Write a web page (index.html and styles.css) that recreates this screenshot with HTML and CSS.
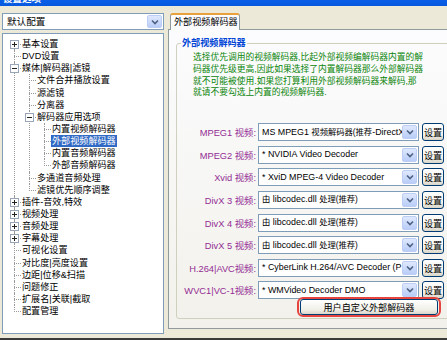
FILE: index.html
```html
<!DOCTYPE html>
<html>
<head>
<meta charset="utf-8">
<link rel="stylesheet" href="styles.css">
</head>
<body>
<div class="window">
  <div class="titlebar"><span class="title">设置选项</span></div>
  <div class="main">
    <div class="left">
      <div class="combo">
        <span class="combo-text">默认配置</span>
        <span class="drop"><svg width="8" height="6" viewBox="0 0 8 6"><path d="M1 1.5l3 3 3-3" fill="none" stroke="#4d6185" stroke-width="1.6"/></svg></span>
      </div>
      <div class="tree">
        <ul class="root">
          <li><svg class="exp" width="9" height="9" viewBox="0 0 9 9"><rect x=".5" y=".5" width="8" height="8" fill="#fff" stroke="#98a5b6"/><path d="M2 4.5h5M4.5 2v5" stroke="#222"/></svg><span class="row">基本设置</span></li>
          <li><span class="row">DVD设置</span></li>
          <li><svg class="exp" width="9" height="9" viewBox="0 0 9 9"><rect x=".5" y=".5" width="8" height="8" fill="#fff" stroke="#98a5b6"/><path d="M2 4.5h5" stroke="#222"/></svg><span class="row">媒体|解码器|滤镜</span>
            <ul>
              <li><span class="row">文件合并播放设置</span></li>
              <li><span class="row">源滤镜</span></li>
              <li><span class="row">分离器</span></li>
              <li><svg class="exp" width="9" height="9" viewBox="0 0 9 9"><rect x=".5" y=".5" width="8" height="8" fill="#fff" stroke="#98a5b6"/><path d="M2 4.5h5" stroke="#222"/></svg><span class="row">解码器应用选项</span>
                <ul>
                  <li><span class="row">内置视频解码器</span></li>
                  <li><span class="row"><span class="sel">外部视频解码器</span></span></li>
                  <li><span class="row">内置音频解码器</span></li>
                  <li><span class="row">外部音频解码器</span></li>
                </ul>
              </li>
              <li><span class="row">多通道音频处理</span></li>
              <li><span class="row">滤镜优先顺序调整</span></li>
            </ul>
          </li>
          <li><svg class="exp" width="9" height="9" viewBox="0 0 9 9"><rect x=".5" y=".5" width="8" height="8" fill="#fff" stroke="#98a5b6"/><path d="M2 4.5h5M4.5 2v5" stroke="#222"/></svg><span class="row">插件-音效,特效</span></li>
          <li><svg class="exp" width="9" height="9" viewBox="0 0 9 9"><rect x=".5" y=".5" width="8" height="8" fill="#fff" stroke="#98a5b6"/><path d="M2 4.5h5M4.5 2v5" stroke="#222"/></svg><span class="row">视频处理</span></li>
          <li><svg class="exp" width="9" height="9" viewBox="0 0 9 9"><rect x=".5" y=".5" width="8" height="8" fill="#fff" stroke="#98a5b6"/><path d="M2 4.5h5M4.5 2v5" stroke="#222"/></svg><span class="row">音频处理</span></li>
          <li><svg class="exp" width="9" height="9" viewBox="0 0 9 9"><rect x=".5" y=".5" width="8" height="8" fill="#fff" stroke="#98a5b6"/><path d="M2 4.5h5M4.5 2v5" stroke="#222"/></svg><span class="row">字幕处理</span></li>
          <li><span class="row">可视化设置</span></li>
          <li><span class="row">对比度|亮度设置</span></li>
          <li><span class="row">边距|位移&amp;扫描</span></li>
          <li><span class="row">问题修正</span></li>
          <li><span class="row">扩展名|关联|截取</span></li>
          <li><span class="row">配置管理</span></li>
        </ul>
      </div>
    </div>
    <div class="right">
      <div class="tabs"><div class="tab">外部视频解码器</div></div>
      <div class="panel">
        <fieldset class="group">
          <legend>外部视频解码器</legend>
          <p class="desc">选择优先调用的视频解码器,比起外部视频编解码器内置的解<br>码器优先级更高,因此如果选择了内置解码器那么外部解码器<br>就不可能被使用.如果您打算利用外部视频解码器来解码,那<br>就请不要勾选上内置的视频解码器.</p>
          <div class="rows">
            <span class="lbl">MPEG1 视频:</span>
            <div class="combo sm"><span class="combo-text">MS MPEG1 <span class="cjk">视频解码器(推荐</span>-DirectX</span><span class="drop"><svg width="8" height="6" viewBox="0 0 8 6"><path d="M1 1.5l3 3 3-3" fill="none" stroke="#4d6185" stroke-width="1.6"/></svg></span></div>
            <span class="btn">设置</span>

            <span class="lbl">MPEG2 视频:</span>
            <div class="combo sm"><span class="combo-text">* NVIDIA Video Decoder</span><span class="drop"><svg width="8" height="6" viewBox="0 0 8 6"><path d="M1 1.5l3 3 3-3" fill="none" stroke="#4d6185" stroke-width="1.6"/></svg></span></div>
            <span class="btn">设置</span>

            <span class="lbl">Xvid 视频:</span>
            <div class="combo sm"><span class="combo-text">* XviD MPEG-4 Video Decoder</span><span class="drop"><svg width="8" height="6" viewBox="0 0 8 6"><path d="M1 1.5l3 3 3-3" fill="none" stroke="#4d6185" stroke-width="1.6"/></svg></span></div>
            <span class="btn">设置</span>

            <span class="lbl">DivX 3 视频:</span>
            <div class="combo sm"><span class="combo-text"><span class="cjk">由</span> libcodec.dll <span class="cjk">处理(推荐)</span></span><span class="drop"><svg width="8" height="6" viewBox="0 0 8 6"><path d="M1 1.5l3 3 3-3" fill="none" stroke="#4d6185" stroke-width="1.6"/></svg></span></div>
            <span class="btn">设置</span>

            <span class="lbl">DivX 4 视频:</span>
            <div class="combo sm"><span class="combo-text"><span class="cjk">由</span> libcodec.dll <span class="cjk">处理(推荐)</span></span><span class="drop"><svg width="8" height="6" viewBox="0 0 8 6"><path d="M1 1.5l3 3 3-3" fill="none" stroke="#4d6185" stroke-width="1.6"/></svg></span></div>
            <span class="btn">设置</span>

            <span class="lbl">DivX 5 视频:</span>
            <div class="combo sm"><span class="combo-text"><span class="cjk">由</span> libcodec.dll <span class="cjk">处理(推荐)</span></span><span class="drop"><svg width="8" height="6" viewBox="0 0 8 6"><path d="M1 1.5l3 3 3-3" fill="none" stroke="#4d6185" stroke-width="1.6"/></svg></span></div>
            <span class="btn">设置</span>

            <span class="lbl">H.264|AVC视频:</span>
            <div class="combo sm"><span class="combo-text">* CyberLink H.264/AVC Decoder (P</span><span class="drop"><svg width="8" height="6" viewBox="0 0 8 6"><path d="M1 1.5l3 3 3-3" fill="none" stroke="#4d6185" stroke-width="1.6"/></svg></span></div>
            <span class="btn">设置</span>

            <span class="lbl">WVC1|VC-1视频:</span>
            <div class="combo sm"><span class="combo-text">* WMVideo Decoder DMO</span><span class="drop"><svg width="8" height="6" viewBox="0 0 8 6"><path d="M1 1.5l3 3 3-3" fill="none" stroke="#4d6185" stroke-width="1.6"/></svg></span></div>
            <span class="btn">设置</span>
          </div>
          <div class="custom-line">
            <div class="mark"><span class="bigbtn">用户自定义外部解码器</span></div>
          </div>
        </fieldset>
      </div>
    </div>
  </div>
</div>
</body>
</html>
```
FILE: styles.css
```css
* { box-sizing: border-box; }
html, body { margin: 0; padding: 0; }
body {
  font-family: "Liberation Sans", "Noto Sans CJK SC", sans-serif;
  font-size: 9.1px;
  color: #000;
  background: #ece9d8;
}
.window {
  width: 447px;
  height: 340px;
  overflow: hidden;
  background: #ece9d8;
  border-bottom: 2px solid #3a3a3a;
}
.titlebar {
  height: 6px;
  overflow: hidden;
  background: linear-gradient(#0a5fe6, #0758df);
  padding-left: 3px;
}
.title {
  display: block;
  margin-top: -7px;
  line-height: 12px;
  color: #fff;
  font-weight: bold;
  font-size: 9.5px;
}
.main {
  display: flex;
  padding: 7px 0 0 2px;
  gap: 4px;
}
.left { width: 162px; flex: none; }
.combo {
  display: flex;
  align-items: center;
  height: 17px;
  background: #fff;
  border: 1px solid #7f9db9;
  padding: 1px;
  font-size: 9.6px;
}
.combo-text {
  flex: 1;
  padding-left: 3px;
  white-space: nowrap;
  overflow: hidden;
  line-height: 13px;
}
.drop {
  flex: none;
  width: 15px;
  height: 100%;
  display: flex;
  align-items: center;
  justify-content: center;
  border: 1px solid #bccdf6;
  border-radius: 2px;
  background: linear-gradient(#dfe8fd, #b9cdf7);
}
.tree {
  margin-top: 3px;
  height: 301px;
  background: #fff;
  border: 1px solid #7f9db9;
  padding: 4px 0 0 1px;
}
.tree ul { list-style: none; margin: 0; padding: 0; }
.tree ul ul { margin-left: 15px; }
.tree li { position: relative; }
.tree li::before {
  content: "";
  position: absolute;
  left: 10px;
  top: 6px;
  width: 7px;
  border-top: 1px dotted #9a9a9a;
}
.tree li::after {
  content: "";
  position: absolute;
  left: 10px;
  top: 0;
  bottom: 0;
  border-left: 1px dotted #9a9a9a;
}
.tree li:last-child::after { bottom: auto; height: 7px; }
.tree .root > li:first-child::after { top: 6px; }
.row {
  display: block;
  height: 12.15px;
  line-height: 12.15px;
  padding-left: 18px;
  white-space: nowrap;
}
.sel {
  display: inline-block;
  background: #316ac5;
  color: #fff;
  padding: 0 1px;
  margin-left: -1px;
}
.exp {
  position: absolute;
  left: 6px;
  top: 2px;
  z-index: 1;
  display: block;
}
.right { width: 300px; flex: none; }
.tabs { height: 16px; padding-left: 2px; display: flex; }
.tab {
  position: relative;
  z-index: 1;
  height: 17px;
  padding: 0 1px 0 3px;
  line-height: 14px;
  background: #fcfcfe;
  border: 1px solid #919b9c;
  border-top: 2px solid #e9a13c;
  border-bottom: none;
  border-radius: 3px 3px 0 0;
  white-space: nowrap;
}
.panel {
  height: 300px;
  border: 1px solid #919b9c;
  border-right: none;
  background: linear-gradient(#fcfcfe, #f2f1eb);
  padding: 7px 0 0 7px;
}
.group {
  margin: 0;
  width: 290px;
  height: 282px;
  border: 1px solid #d0d0bf;
  border-radius: 3px;
  padding: 0 0 0 4px;
}
.group legend {
  color: #0046d5;
  font-weight: bold;
  padding: 0 1px;
  line-height: 12px;
}
.desc {
  margin: 3px 0 0 12px;
  color: #0a850a;
  font-size: 8.75px;
  line-height: 11.8px;
  white-space: nowrap;
}
.rows {
  margin-top: 24px;
  display: grid;
  grid-template-columns: 75px 161px 23px;
  column-gap: 2px;
  row-gap: 4.6px;
  align-items: center;
}
.rows .btn { margin-left: 1px; }
.lbl {
  text-align: right;
  color: #932c93;
  white-space: nowrap;
  font-size: 9.3px;
}
.combo.sm { height: 18px; font-size: 8.9px; }
.combo.sm .combo-text { padding-left: 2px; }
.cjk { font-size: 8.3px; }
.btn {
  display: flex;
  align-items: center;
  justify-content: center;
  height: 18px;
  border: 1px solid #003c74;
  border-radius: 3px;
  background: linear-gradient(#ffffff, #f0efe8 70%, #d9d6c8);
  white-space: nowrap;
}
.custom-line {
  display: flex;
  padding-left: 116px;
  margin-top: -2px;
}
.mark {
  border: 2px solid #e5443f;
  border-radius: 6px;
  padding: 0 1px;
}
.bigbtn {
  display: flex;
  align-items: center;
  justify-content: center;
  width: 138px;
  height: 16px;
  border: 1px solid #003c74;
  border-radius: 3px;
  background: linear-gradient(#ffffff, #f0efe8 70%, #d9d6c8);
  white-space: nowrap;
}
```
